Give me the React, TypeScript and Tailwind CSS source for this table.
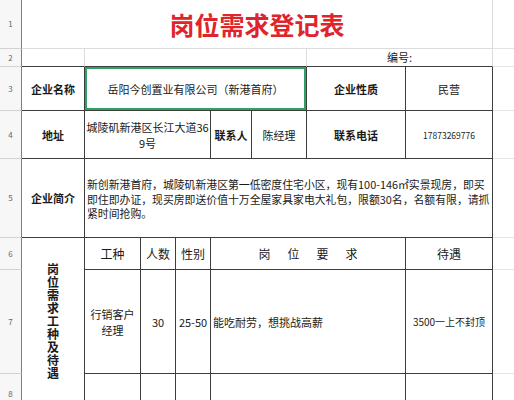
import React from 'react';

const FONT = '"Noto Sans CJK SC", "Noto Sans", "Liberation Sans", sans-serif';

type CellProps = {
  className?: string;
  children?: React.ReactNode;
};

// table cell with dark borders
const Td: React.FC<CellProps> = ({ className = '', children }) => (
  <div
    className={`flex items-center justify-center text-center border-r border-b border-[#3d3d3d] text-[11px] leading-[14px] text-[#1a1a1a] ${className}`}
  >
    {children}
  </div>
);

// plain sheet cell with light gridlines
const Gc: React.FC<CellProps> = ({ className = '', children }) => (
  <div className={`flex items-center justify-center border-r border-b border-[#dcdcdc] ${className}`}>
    {children}
  </div>
);

const RowNo: React.FC<{ n: number }> = ({ n }) => (
  <div className="flex items-center justify-center bg-[#f7f7f7] border-r border-b border-r-[#7d7d7d] border-b-[#d2d2d2] text-[8px] text-[#666]">
    {n}
  </div>
);

const Edge: React.FC = () => <div className="border-b border-[#e4e4e4]" />;

export default function App() {
  return (
    <div className="w-[514px] h-[400px] overflow-hidden bg-white" style={{ fontFamily: FONT }}>
      <div className="grid grid-cols-[22px_63px_56px_35px_35px_41px_55px_99px_87px_21px] grid-rows-[49px_18px_44px_48px_79px_32px_104px_40px]">
        {/* row 1 */}
        <RowNo n={1} />
        <Gc className="col-span-8">
          <span className="text-[25px] font-bold text-[#e0242c] leading-none">岗位需求登记表</span>
        </Gc>
        <Edge />

        {/* row 2 */}
        <RowNo n={2} />
        <Gc className="border-b-[#3d3d3d]" />
        <Gc className="col-span-5 border-b-[#3d3d3d]" />
        <Gc className="col-span-2 border-b-[#3d3d3d] text-[11px] text-[#1a1a1a]">编号:</Gc>
        <Edge />

        {/* row 3 */}
        <RowNo n={3} />
        <Td className="font-bold">企业名称</Td>
        <Td className="col-span-5 shadow-[inset_0_0_0_2px_#2ea163]">岳阳今创置业有限公司（新港首府）</Td>
        <Td className="font-bold">企业性质</Td>
        <Td>民营</Td>
        <Edge />

        {/* row 4 */}
        <RowNo n={4} />
        <Td className="font-bold">地址</Td>
        <Td className="col-span-3 !leading-[16px]">
          城陵矶新港区长江大道36
          <br />
          9号
        </Td>
        <Td className="font-bold">联系人</Td>
        <Td>陈经理</Td>
        <Td className="font-bold">联系电话</Td>
        <Td className="!text-[8.5px]">17873269776</Td>
        <Edge />

        {/* row 5 */}
        <RowNo n={5} />
        <Td className="font-bold">企业简介</Td>
        <Td className="col-span-7 !justify-start !items-start !text-left pl-[2px] pt-[18px] !leading-[14.5px] !text-[10.85px]">
          <div className="whitespace-nowrap">
            新创新港首府，城陵矶新港区第一低密度住宅小区，现有100-146㎡实景现房，即买
            <br />
            即住即办证，现买房即送价值十万全屋家具家电大礼包，限额30名，名额有限，请抓
            <br />
            紧时间抢购。
          </div>
        </Td>
        <Edge />

        {/* row 6 */}
        <RowNo n={6} />
        <Td className="row-span-3 !items-start pt-[24px] border-b-0">
          <div className="w-[12px] text-[12px] leading-[13px] font-bold">岗位需求工种及待遇</div>
        </Td>
        <Td className="!text-[12px]">工种</Td>
        <Td className="!text-[12px]">人数</Td>
        <Td className="!text-[12px]">性别</Td>
        <Td className="col-span-3 !text-[12px] tracking-[17px] pl-[17px]">岗位要求</Td>
        <Td className="!text-[12px]">待遇</Td>
        <Edge />

        {/* row 7 */}
        <RowNo n={7} />
        <Td className="!leading-[16px]">
          行销客户
          <br />
          经理
        </Td>
        <Td>30</Td>
        <Td>25-50</Td>
        <Td className="col-span-3 !justify-start pl-[2px]">能吃耐劳，想挑战高薪</Td>
        <Td className="!text-[10px]">3500一上不封顶</Td>
        <Edge />

        {/* row 8 */}
        <RowNo n={8} />
        <Td />
        <Td />
        <Td />
        <Td className="col-span-3" />
        <Td />
        <Edge />
      </div>
    </div>
  );
}
